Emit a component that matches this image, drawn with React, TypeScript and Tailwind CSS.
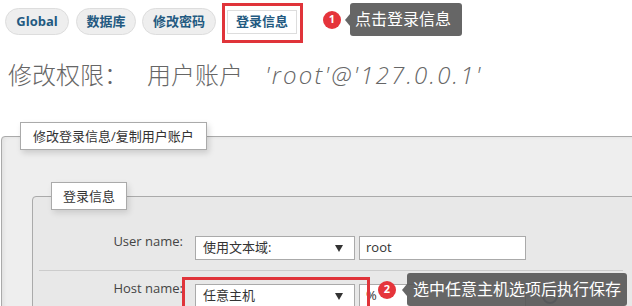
import React from "react"

const tabs = [
  { name: "Global", cls: "w-[64px]" },
  { name: "数据库", cls: "ml-[7px] w-[60px]" },
  { name: "修改密码", cls: "ml-[6px] w-[74px]" },
]

function Badge({ n }: { n: string }) {
  return (
    <span className="flex h-[18px] w-[18px] items-center justify-center rounded-full bg-[#e5343b] text-[11px] font-bold text-white">
      {n}
    </span>
  )
}

function Tip({ text, pad }: { text: string; pad: string }) {
  return (
    <div className="relative flex items-center">
      <span className="h-0 w-0 border-y-[6px] border-r-[5px] border-y-transparent border-r-[#555]/90" />
      <div className={`${pad} rounded-[3px] bg-[#555]/90 text-[16px] leading-[33px] text-white whitespace-nowrap`}>
        {text}
      </div>
    </div>
  )
}

function Select({ value }: { value: string }) {
  return (
    <div className="flex h-[24px] w-[160px] items-center justify-between border border-[#aaa] bg-white pl-[7px] pr-[11px] text-[13px] text-[#333]">
      <span>{value}</span>
      <span className="h-0 w-0 border-x-[4px] border-t-[7px] border-x-transparent border-t-[#333]" />
    </div>
  )
}

export default function App() {
  return (
    <div className="relative h-[306px] w-[632px] overflow-hidden bg-white font-['Open_Sans','Noto_Sans_CJK_SC',sans-serif] text-[#333]">
      {/* tabs */}
      <div className="flex items-start pl-[5px] pt-[8px]">
        {tabs.map(t => (
          <div
            key={t.name}
            className={`${t.cls} flex h-[27px] items-center justify-center rounded-full border border-[#ddd] bg-[#eee] text-[13px] font-bold text-[#235a81]`}
          >
            {t.name}
          </div>
        ))}
        <div className="relative ml-[11px] mt-[2px]">
          <div className="flex h-[24px] w-[70px] items-center justify-center border border-[#ddd] bg-white text-[13px] font-bold text-[#235a81]">
            登录信息
          </div>
          <div className="absolute -bottom-[9px] -left-[5px] -right-[6px] -top-[7px] border-[3px] border-[#e0343a]" />
        </div>
        <div className="ml-[26px] -mt-[5px] flex items-center gap-[4px]">
          <Badge n="1" />
          <Tip text="点击登录信息" pad="pl-[5px] pr-[11px]" />
        </div>
      </div>

      {/* heading */}
      <h2 className="mt-[23px] flex items-baseline pl-[8px] text-[24px] font-light leading-[32px] text-[#666]">
        <span>修改权限：</span>
        <span className="ml-[19px]">用户账户</span>
        <i className="ml-[22px] tracking-[2.2px]">'root'@'127.0.0.1'</i>
      </h2>

      {/* outer fieldset */}
      <fieldset className="mt-[31px] ml-[1px] w-[660px] rounded-tl-[4px] border border-[#aaa] bg-[#eee] px-[18px] pb-[30px] shadow-[inset_2px_0_4px_rgba(0,0,0,0.06)]">
        <legend className="border border-[#aaa] bg-white px-[12px] text-[13px] leading-[26px] text-[#333] shadow-[2px_3px_6px_rgba(0,0,0,0.15)]">
          修改登录信息/复制用户账户
        </legend>

        <fieldset className="mt-[32px] ml-[12px] rounded-tl-[4px] border border-[#aaa] bg-[#e8e8e8] px-[18px] pb-[20px]">
          <legend className="border border-[#aaa] bg-white px-[11px] text-[13px] leading-[26px] text-[#333] shadow-[2px_3px_6px_rgba(0,0,0,0.12)]">
            登录信息
          </legend>

          <div className="flex items-start pt-[26px]">
            <div className="-mt-[1px] w-[144px] pr-[12px] text-right text-[13px] leading-none text-[#444]">User name:</div>
            <Select value="使用文本域:" />
            <div className="ml-[4px] flex h-[24px] w-[167px] items-center border border-[#aaa] bg-white pl-[6px] text-[13px] text-[#333]">
              root
            </div>
          </div>

          <div className="mt-[10px] ml-[-12px] border-t border-[#ccc]" />

          <div className="flex items-start pt-[13px]">
            <div className="-mt-[2px] w-[144px] pr-[12px] text-right text-[13px] leading-none text-[#444]">Host name:</div>
            <div className="relative">
              <Select value="任意主机" />
              <div className="absolute -bottom-[20px] -left-[13px] -right-[15px] -top-[7px] border-[3px] border-[#e0343a]" />
            </div>
            <div className="ml-[4px] flex h-[24px] w-[167px] items-center border border-[#aaa] bg-white pl-[6px] text-[13px] text-[#333]">
              %
            </div>
            <span className="ml-[16px] mt-[4px] h-[16px] w-[16px] rounded-full border-2 border-[#6a7a9a]" />
          </div>
        </fieldset>
      </fieldset>

      <div className="absolute left-[378px] top-[273px] flex items-center gap-[6px]">
        <Badge n="2" />
        <Tip text="选中任意主机选项后执行保存" pad="px-[6px]" />
      </div>
    </div>
  )
}
